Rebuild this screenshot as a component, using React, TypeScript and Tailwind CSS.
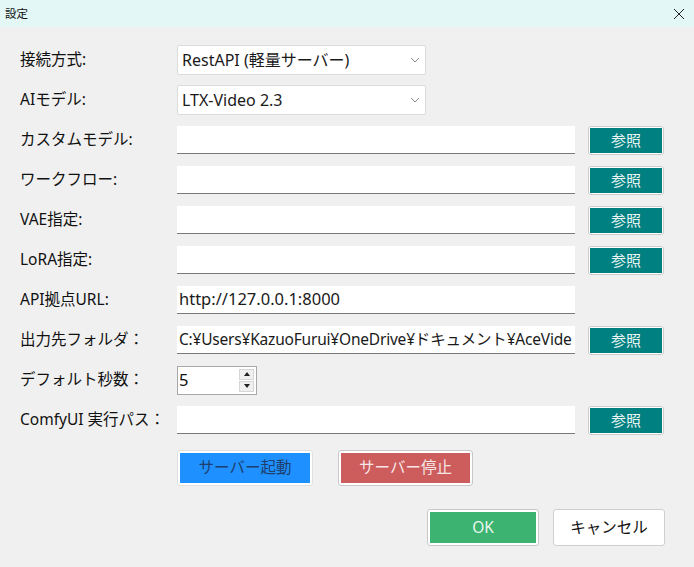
import React from "react";

const font = "font-['Segoe_UI','Noto_Sans','Noto_Sans_CJK_JP',sans-serif]";

function Chevron() {
  return (
    <svg width="10" height="6" viewBox="0 0 10 6" className="text-[#8a8a8a]">
      <path d="M1 1 L5 5 L9 1" fill="none" stroke="currentColor" strokeWidth="1" />
    </svg>
  );
}

function Combo({ value }: { value: string }) {
  return (
    <div className="flex flex-none items-center justify-between w-[249px] h-[30px] bg-white border border-[#dcdcdc] rounded-[2px] pl-[4px] pr-[5px]">
      <span className="text-[16px] text-[#1a1a1a] whitespace-nowrap">{value}</span>
      <Chevron />
    </div>
  );
}

function TextBox({ value = "", small = false }: { value?: string; small?: boolean }) {
  return (
    <div className="flex flex-none items-center w-[398px] h-[28px] bg-white border-b border-[#7a7a7a] pl-[2px] overflow-hidden">
      <span
        className={`${small ? "text-[15.5px] tracking-[-0.2px]" : "text-[16.5px]"} text-[#1a1a1a] whitespace-nowrap`}
      >
        {value}
      </span>
    </div>
  );
}

function Browse() {
  return (
    <div className="flex-none ml-[13px] w-[76px] h-[29px] rounded-[3px] border border-[#cccccc] bg-white p-px">
      <div className="w-full h-full bg-[#008080] flex items-center justify-center text-[15px] text-[#e8f4f4]">
        参照
      </div>
    </div>
  );
}

function Row({ label, children }: { label: string; children: React.ReactNode }) {
  return (
    <div className="flex items-center h-[40px]">
      <div className="flex-none w-[157px] text-[15.5px] text-[#111] whitespace-nowrap">{label}</div>
      {children}
    </div>
  );
}

function Spin() {
  return (
    <div className="flex flex-none w-[80px] h-[29px] bg-white border border-[#a8a8a8]">
      <div className="flex-1 flex items-center pl-[1px] text-[16.5px] text-[#111]">5</div>
      <div className="flex flex-col w-[15px] my-[2px] mr-[2px] gap-px">
        <div className="flex-1 bg-[#f0f0f0] border border-[#d6d6d6] flex items-center justify-center">
          <svg width="6" height="4" viewBox="0 0 6 4"><path d="M0 4 L3 0 L6 4 Z" fill="#222" /></svg>
        </div>
        <div className="flex-1 bg-[#f0f0f0] border border-[#d6d6d6] flex items-center justify-center">
          <svg width="6" height="4" viewBox="0 0 6 4"><path d="M0 0 L3 4 L6 0 Z" fill="#222" /></svg>
        </div>
      </div>
    </div>
  );
}

export default function App() {
  return (
    <div className={`w-[694px] h-[567px] bg-[#f0f0f0] overflow-hidden ${font}`}>
      {/* title bar */}
      <div className="flex items-center justify-between h-[27px] bg-[#e3f8f6] pl-[5px] pr-[9px]">
        <span className="text-[11.5px] text-[#111] font-['Noto_Sans_CJK_JP',sans-serif]">設定</span>
        <svg width="12" height="12" viewBox="0 0 12 12">
          <path d="M1 1 L11 11 M11 1 L1 11" stroke="#222" strokeWidth="1" />
        </svg>
      </div>

      <div className="pt-[13px] pl-[20px]">
        <Row label="接続方式:">
          <Combo value="RestAPI (軽量サーバー)" />
        </Row>
        <Row label="AIモデル:">
          <Combo value="LTX-Video 2.3" />
        </Row>
        <Row label="カスタムモデル:">
          <TextBox />
          <Browse />
        </Row>
        <Row label="ワークフロー:">
          <TextBox />
          <Browse />
        </Row>
        <Row label="VAE指定:">
          <TextBox />
          <Browse />
        </Row>
        <Row label="LoRA指定:">
          <TextBox />
          <Browse />
        </Row>
        <Row label="API拠点URL:">
          <TextBox value="http://127.0.0.1:8000" />
        </Row>
        <Row label="出力先フォルダ：">
          <TextBox small value="C:¥Users¥KazuoFurui¥OneDrive¥ドキュメント¥AceVide" />
          <Browse />
        </Row>
        <Row label="デフォルト秒数：">
          <Spin />
        </Row>
        <Row label="ComfyUI 実行パス：">
          <TextBox />
          <Browse />
        </Row>

        {/* server buttons */}
        <div className="flex mt-[10px] ml-[157px] gap-[25px]">
          <div className="w-[136px] h-[36px] rounded-[3px] border border-[#e0e0e0] bg-white p-[2px]">
            <div className="w-full h-full bg-[#1e90ff] flex items-center justify-center text-[15.5px] text-[#1f3f6e]">
              サーバー起動
            </div>
          </div>
          <div className="w-[135px] h-[36px] rounded-[3px] border border-[#c8c8c8] bg-white p-[2px]">
            <div className="w-full h-full bg-[#cd5c5c] flex items-center justify-center text-[15.5px] text-[#f6e6e6]">
              サーバー停止
            </div>
          </div>
        </div>

        {/* dialog buttons */}
        <div className="flex justify-end mt-[23px] mr-[29px] gap-[14px]">
          <div className="w-[112px] h-[37px] rounded-[3px] border border-[#c8c8c8] bg-white p-[2px]">
            <div className="w-full h-full bg-[#3cb371] flex items-center justify-center text-[15.5px] text-[#eaf6ee]">
              OK
            </div>
          </div>
          <div className="w-[112px] h-[37px] rounded-[3px] border border-[#cfcfcf] bg-white flex items-center justify-center text-[15.5px] text-[#111]">
            キャンセル
          </div>
        </div>
      </div>
    </div>
  );
}
